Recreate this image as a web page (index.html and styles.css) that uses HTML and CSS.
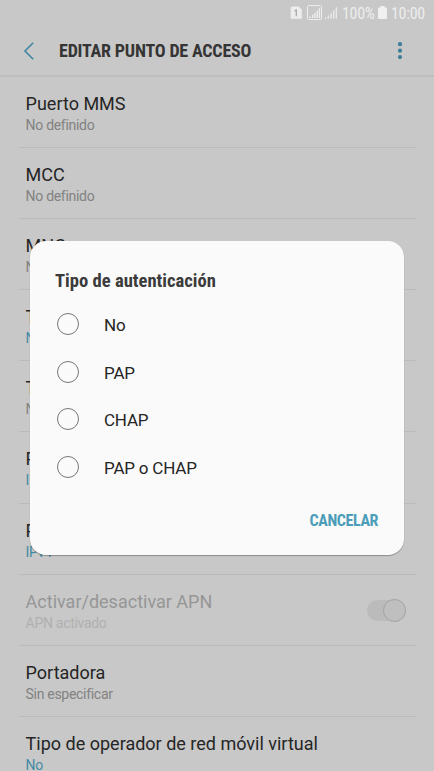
FILE: index.html
```html
<!DOCTYPE html>
<html lang="es">
<head>
<meta charset="utf-8">
<title>Editar punto de acceso</title>
<link rel="stylesheet" href="styles.css">
</head>
<body>
<div class="screen">
  <div class="statusbar">
    <svg class="status-icons" width="50" height="16" viewBox="0 0 50 16" fill="#ededed">
      <path d="M2.2 .5H8.6L11.8 3.5V12.8H1.4Q.7 12.8 .7 12V2Q.7 .5 2.2 .5Z"/>
      <path d="M4.4 5L6.3 4.1V10.2" fill="none" stroke="#aaa" stroke-width="1.3"/>
      <rect x="17.5" y="-.4" width="14" height="14" rx="1" fill="none" stroke="#ededed"/>
      <path d="M19.5 10.5h1.4v1.4h-1.4zM22 8.7h1.4v3.2H22zM24.3 6.9h1.4v5h-1.4zM26.6 4.5H28v7.4h-1.4zM28.8 2h1.3v9.9h-1.3z"/>
      <path d="M35 11.2h1.5v1.5H35zM37.7 9.5h1.4v3.2h-1.4zM40.4 7.3h1.4v5.4h-1.4zM43 4.6h1.4v8.1H43zM45.6 1.3H47v11.4h-1.4z" opacity=".9"/>
    </svg>
    <span class="percent">100%</span>
    <svg class="battery" width="9" height="13" viewBox="0 0 9 13"><path d="M2.3 0H6.7V1.4H8Q9 1.4 9 2.4V12Q9 13 8 13H1Q0 13 0 12V2.4Q0 1.4 1 1.4H2.3Z" fill="#f0f0f0"/></svg>
    <span class="clock">10:00</span>
  </div>
  <header class="appbar">
    <svg class="back" width="12" height="18" viewBox="0 0 12 18"><path d="M10.2 .8L2 9L10.2 17.2" fill="none" stroke="#3f86a0" stroke-width="1.6"/></svg>
    <h1 class="condensed">EDITAR PUNTO DE ACCESO</h1>
    <svg class="more" width="6" height="18" viewBox="0 0 6 18" fill="#3c7f97"><circle cx="3" cy="2.2" r="2.1"/><circle cx="3" cy="8.7" r="2.1"/><circle cx="3" cy="15.1" r="2.1"/></svg>
  </header>
  <main class="list">
    <div class="row"><div class="title">Puerto MMS</div><div class="sub">No definido</div></div>
    <div class="row"><div class="title">MCC</div><div class="sub">No definido</div></div>
    <div class="row"><div class="title">MNC</div><div class="sub">No definido</div></div>
    <div class="row"><div class="title">Tipo de autenticación</div><div class="sub accent">No definido</div></div>
    <div class="row"><div class="title">Tipo de APN</div><div class="sub">No definido</div></div>
    <div class="row"><div class="title">Protocolo APN</div><div class="sub accent">IPv4</div></div>
    <div class="row"><div class="title">Protocolo de roaming APN</div><div class="sub accent">IPv4</div></div>
    <div class="row disabled"><div class="label"><div class="title">Activar/desactivar APN</div><div class="sub">APN activado</div></div><div class="switch"><div class="knob"></div></div></div>
    <div class="row"><div class="title">Portadora</div><div class="sub">Sin especificar</div></div>
    <div class="row"><div class="title">Tipo de operador de red móvil virtual</div><div class="sub accent">No</div></div>
  </main>
  <section class="dialog">
    <h2 class="condensed">Tipo de autenticación</h2>
    <div class="option"><span class="radio"></span><span class="choice">No</span></div>
    <div class="option"><span class="radio"></span><span class="choice">PAP</span></div>
    <div class="option"><span class="radio"></span><span class="choice">CHAP</span></div>
    <div class="option"><span class="radio"></span><span class="choice">PAP o CHAP</span></div>
    <div class="actions"><span class="condensed cancel">CANCELAR</span></div>
  </section>
</div>
</body>
</html>
```
FILE: styles.css
```css
* { box-sizing: border-box; }
body { margin: 0; font-family: Roboto, sans-serif; background: #c8c8c8; }
.screen { position: relative; width: 434px; height: 771px; overflow: hidden; background: #c8c8c8; }
.statusbar { display: flex; height: 26px; padding: 6px 0 0 290px; color: #ededed; font-family: "Roboto Condensed", Roboto, sans-serif; font-stretch: 75%; font-size: 16px; letter-spacing: -.3px; line-height: 16px; white-space: nowrap; }
.status-icons { flex: none; overflow: visible; }
.percent { width: 35px; margin-left: 2px; }
.battery { flex: none; margin-left: 1px; }
.clock { margin-left: 4px; }
.condensed { font-family: "Roboto Condensed", Roboto, sans-serif; font-stretch: 75%; font-weight: 700; white-space: nowrap; }
.appbar { display: flex; align-items: center; height: 51px; padding: 1px 31px 0 23px; border-bottom: 2px solid #bebebe; }
.back { margin-right: 24px; }
h1 { flex: 1; margin: 0; font-size: 18px; letter-spacing: -.2px; line-height: 22px; color: #353535; }
.row { height: 71.1px; margin: 0 18px 0 19px; padding: 16px 0 0 6.6px; border-bottom: 1px solid #bbb; }
.title { font-size: 18px; line-height: 22px; color: #252525; white-space: nowrap; }
.sub { font-size: 14px; letter-spacing: -.3px; line-height: 21px; color: #828282; white-space: nowrap; }
.accent { color: #438ba5; }
.disabled { display: flex; justify-content: space-between; }
.disabled .title { color: #969696; }
.disabled .sub { color: #b0b0b0; }
.switch { display: flex; justify-content: flex-end; align-items: center; width: 39px; height: 21px; margin: 9px 10px 0 0; border-radius: 11px; background: #bbb; }
.knob { flex: none; width: 23px; height: 23px; border: 1px solid #a3a3a3; border-radius: 50%; background: #bfbfbf; }
.dialog { position: absolute; left: 30px; top: 241px; width: 374px; height: 314px; padding: 28px 25px 0; border-radius: 16px; background: #fafafa; box-shadow: 0 1px 1px rgba(0, 0, 0, .3); }
h2 { margin: 0 0 7px; font-size: 18.6px; line-height: 24px; color: #3b3b3b; }
.option { display: flex; align-items: center; height: 47.8px; font-size: 17px; letter-spacing: -.2px; color: #252525; }
.choice { padding-top: 2px; }
.radio { width: 22px; height: 22px; margin: 0 25px 0 2px; border: 1.5px solid #777; border-radius: 50%; }
.actions { display: flex; justify-content: flex-end; margin-top: 18px; padding-right: 1px; }
.cancel { font-size: 16px; letter-spacing: -.4px; line-height: 23px; color: #4b9db9; }
```
